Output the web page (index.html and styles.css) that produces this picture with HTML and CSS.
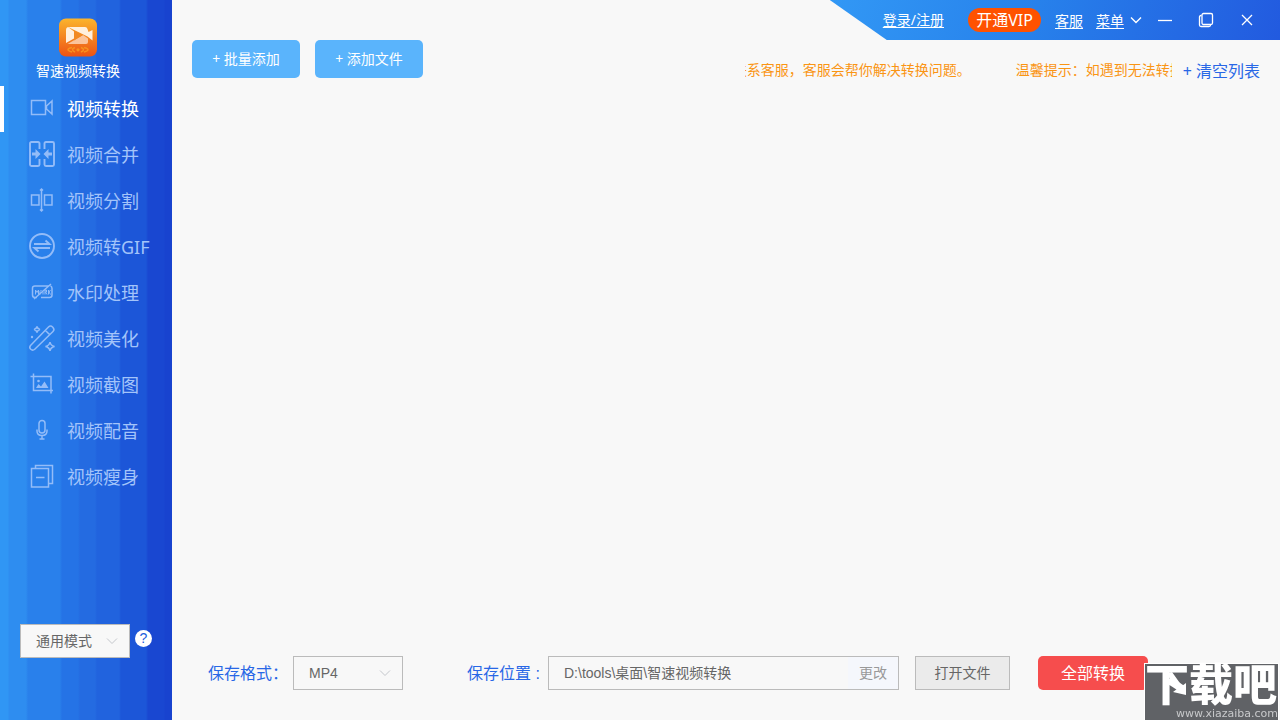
FILE: index.html
```html
<!DOCTYPE html>
<html lang="zh-CN">
<head>
<meta charset="utf-8">
<title>智速视频转换</title>
<link rel="stylesheet" href="styles.css">
</head>
<body>
<div class="app">
  <aside class="sidebar">
    <div class="brand">
      <svg class="brand-logo" viewBox="0 0 38 38" aria-hidden="true">
        <defs>
          <linearGradient id="logo-fill" x1="0" y1="0" x2="0" y2="1">
            <stop offset="0" stop-color="#fbb42c"/>
            <stop offset="1" stop-color="#ed5314"/>
          </linearGradient>
        </defs>
        <rect width="38" height="38" rx="7" fill="url(#logo-fill)"/>
        <path d="M9 8.500H26Q28 8.500 28.500 10.500L29.500 13.500L33.500 11.500V22L28.500 18L9 8.500Z" fill="#fff0de"/>
        <path d="M9 8.500Q7 9 7 11V24.500L15 20V13Z" fill="#fff0de"/>
        <path d="M8.500 25.500L24 16.500L29 20V23.500Q29 25.500 27 25.500Z" fill="#fbc49c"/>
        <path d="M15 12L24 16.500L15 22Z" fill="#f28a22"/>
        <path d="M13 29Q5 31 13 33.500M16 29Q11 31 16 33.500M22 29Q27 31 22 33.500M25 29Q33 31 25 33.500" fill="none" stroke="#f7921e" stroke-width="1.500"/>
        <circle cx="19" cy="31.300" r="1.600" fill="#f7921e"/>
      </svg>
      <span class="brand-name">智速视频转换</span>
    </div>
    <nav class="menu">
      <button class="menu-item active" type="button">
        <svg class="icon" viewBox="0 0 26 26"><path d="M2.500 5.500H16.500V19.500H2.500ZM23 6V19L17.500 14V11L23 6Z"/></svg>视频转换</button>
      <button class="menu-item" type="button">
        <svg class="icon bold" viewBox="0 0 26 26"><path d="M10.500 8V2.500Q10.500 1 9 1H2.500Q1 1 1 2.500V23.500Q1 25 2.500 25H9Q10.500 25 10.500 23.500V18M15.500 8V2.500Q15.500 1 17 1H23.500Q25 1 25 2.500V23.500Q25 25 23.500 25H17Q15.500 25 15.500 23.500V18"/><path class="solid" d="M3 11.500H6.500V8L11.500 13L6.500 18V14.500H3ZM23 11.500H19.500V8L14.500 13L19.500 18V14.500H23Z"/></svg>视频合并</button>
      <button class="menu-item" type="button">
        <svg class="icon" viewBox="0 0 26 26"><path d="M2.500 8H10V18H2.500ZM15.500 8H23V18H15.500ZM12.500 3V23M11 3.500L12.500 2L14 3.500M11 22.500L12.500 24L14 22.500"/></svg>视频分割</button>
      <button class="menu-item" type="button">
        <svg class="icon bold" viewBox="0 0 26 26"><circle cx="13" cy="13" r="12"/><path d="M5 11H20.500L16.500 7.500M21 15H5.500L9.500 18.500"/></svg>视频转GIF</button>
      <button class="menu-item" type="button">
        <svg class="icon" viewBox="0 0 26 26"><path d="M19.500 7H6Q3.500 7 3.500 9V16Q3.500 18.500 6 18.500H8M12 18.500H20.500Q23 18.500 23 16V9.500Q23 7.500 21.500 7M5 20L22 5"/><path class="small" d="M6.500 15.500V11L8 13.500L9.500 11V15.500M11 15.500V12.500L12.500 11M14 15.500V13M16 15.500V11H17.500V13H16.500L18 15.500M19.500 11V15.500M21.500 11L20 13L21.500 15.500"/></svg>水印处理</button>
      <button class="menu-item" type="button">
        <svg class="icon" viewBox="0 0 26 26"><path d="M1.500 20.500L19.500 2Q21.500 0 23.800 2.200Q26 4.500 24 6.500L5.500 24.500Q3.500 26 1.500 24Q0 22.500 1.500 20.500ZM16.500 5.500L21 10M8 1.500Q8.500 4 11 4.500Q8.500 5 8 7.500Q7.500 5 5 4.500Q7.500 4 8 1.500ZM21 17Q21.500 20.500 25.500 21.500Q21.500 22.500 21 26Q20.500 22.500 16.500 21.500Q20.500 20.500 21 17Z"/><circle class="solid" cx="3" cy="12" r="1.200"/></svg>视频美化</button>
      <button class="menu-item" type="button">
        <svg class="icon" viewBox="0 0 26 26"><path d="M4.500 2.500V19.500H24M1.500 5.500H22V22.500"/><path class="solid" d="M7 17L9.500 13L12 15.500L15.500 10.500L19.500 17Z"/><circle class="solid" cx="9.500" cy="10" r="1.300"/></svg>视频截图</button>
      <button class="menu-item" type="button">
        <svg class="icon" viewBox="0 0 26 26"><rect x="10" y="3.500" width="6" height="12.500" rx="3"/><path d="M8 12.500V14Q8 18.500 13 18.500Q18 18.500 18 14V12.500M13 18.500V22M10.500 22H15.500"/></svg>视频配音</button>
      <button class="menu-item" type="button">
        <svg class="icon" viewBox="0 0 26 26"><path d="M2.500 5.500H19.500V24H2.500ZM6.500 5V2.500H23.500V20.500H20M7 14.500H15.500"/></svg>视频瘦身</button>
    </nav>
    <div class="mode">
      <label class="select-box">
        <select class="select" aria-label="模式"><option>通用模式</option></select>
        <svg class="chevron" viewBox="0 0 12 8"><path d="M1 1.500L6 6.500L11 1.500"/></svg>
      </label>
      <button class="help" type="button">?</button>
    </div>
  </aside>

  <main class="main">
    <header class="topbar">
      <a class="top-link login" href="#">登录/注册</a>
      <button class="vip" type="button">开通VIP</button>
      <a class="top-link low service" href="#">客服</a>
      <a class="top-link low" href="#">菜单</a>
      <svg class="menu-arrow" viewBox="0 0 12 8"><path d="M1 1.500L6 6.500L11 1.500"/></svg>
      <div class="window-controls">
        <button class="window-button" type="button" aria-label="最小化"><svg viewBox="0 0 16 16"><path d="M1 8.500H15"/></svg></button>
        <button class="window-button" type="button" aria-label="最大化"><svg viewBox="0 0 16 16"><rect x="4" y="1.500" width="10.500" height="11" rx="1.500"/><path d="M3.500 3.500H3Q1.500 3.500 1.500 5V13Q1.500 14.500 3 14.500H11Q12.500 14.500 12.500 13"/></svg></button>
        <button class="window-button" type="button" aria-label="关闭"><svg viewBox="0 0 16 16"><path d="M3 3L13 13M13 3L3 13"/></svg></button>
      </div>
    </header>

    <div class="toolbar">
      <button class="add-button" type="button">+ 批量添加</button>
      <button class="add-button" type="button">+ 添加文件</button>
      <div class="notice">
        <div class="notice-track">
          <span>联系客服，客服会帮你解决转换问题。</span>
          <span>温馨提示：如遇到无法转换</span>
        </div>
      </div>
      <button class="clear" type="button">+ 清空列表</button>
    </div>

    <section class="file-list" aria-label="文件列表"></section>

    <footer class="footer">
      <label class="footer-label" for="format">保存格式：</label>
      <div class="select-box">
        <select class="select" id="format"><option>MP4</option></select>
        <svg class="chevron" viewBox="0 0 12 8"><path d="M1 1.500L6 6.500L11 1.500"/></svg>
      </div>
      <label class="footer-label location" for="path">保存位置 :</label>
      <div class="path-box">
        <input class="path" id="path" type="text" value="D:\tools\桌面\智速视频转换">
        <button class="change" type="button">更改</button>
      </div>
      <button class="open" type="button">打开文件</button>
      <button class="convert" type="button">全部转换</button>
    </footer>
  </main>

  <div class="watermark">
    <span class="watermark-name">下载吧</span>
    <svg class="watermark-arrow" viewBox="0 0 24 28" aria-hidden="true"><path d="M2 3L8 2L18 16L22 13V25L9 22L13 19Z"/></svg>
    <span class="watermark-url">www.xiazaiba.com</span>
  </div>
</div>
</body>
</html>
```

FILE: styles.css
```css
* {
  box-sizing: border-box;
}

body {
  margin: 0;
  background: #f8f8f8;
  font-family: "Liberation Sans", "Noto Sans CJK SC", sans-serif;
  font-size: 14px;
}

button,
input,
select {
  margin: 0;
  padding: 0;
  border: 0;
  background: none;
  color: inherit;
  font: inherit;
}

svg {
  fill: none;
  stroke: currentColor;
}

.app {
  display: flex;
  min-height: 100vh;
}

.sidebar {
  display: flex;
  flex: none;
  flex-direction: column;
  width: 172px;
  padding: 18px 0 62px;
  background: linear-gradient(90deg, #3096f4 0 8px, #2e8df0 9px 26px, #2980eb 28px 60px, #2573e6 62px 78px, #246be1 80px 95px, #2163de 97px 119px, #1c56d8 121px 146px, #1947d1 148px 164px, #1843cf 165px);
  color: #fff;
}

.brand {
  display: flex;
  flex-direction: column;
  align-items: center;
  width: 156px;
  height: 68px;
}

.brand-logo {
  width: 38px;
  height: 39px;
  stroke: none;
}

.brand-name {
  line-height: 28px;
}

.menu {
  display: flex;
  flex: 1;
  flex-direction: column;
}

.menu-item {
  display: flex;
  align-items: center;
  gap: 12px;
  height: 46px;
  padding: 0 0 2px 29px;
  color: #a3c4fa;
  font-family: "Noto Sans", "Noto Sans CJK SC", sans-serif;
  font-size: 18px;
}

.menu-item.active {
  padding-left: 25px;
  border-left: 4px solid #fff;
  color: #fff;
}

.icon {
  flex: none;
  width: 26px;
  height: 26px;
  color: #93bcf8;
  stroke-width: 1.5;
  overflow: visible;
}

.icon.bold {
  stroke-width: 1.9;
}

.icon .solid {
  fill: currentColor;
  stroke: none;
}

.icon .small {
  stroke-width: 1;
}

.mode {
  display: flex;
  gap: 5px;
  padding-left: 20px;
}

.select-box {
  position: relative;
  flex: none;
  width: 110px;
  height: 34px;
}

.select {
  width: 100%;
  height: 100%;
  padding-left: 15px;
  border: 1px solid #bbb;
  border-radius: 0;
  background: #f8f8f8;
  color: #666;
  appearance: none;
}

.chevron {
  position: absolute;
  top: 13px;
  right: 12px;
  width: 12px;
  height: 8px;
  color: #c4c7cc;
  pointer-events: none;
}

.help {
  width: 17px;
  height: 17px;
  margin-top: 6px;
  border-radius: 50%;
  background: #fff;
  color: #2260dc;
  line-height: 17px;
}

.main {
  display: flex;
  flex: 1;
  flex-direction: column;
  min-width: 0;
}

.topbar {
  display: flex;
  align-items: center;
  align-self: flex-end;
  height: 40px;
  padding: 0 25px 0 53px;
  background: linear-gradient(110deg, #3298f5, #2781eb 45%, #225adf);
  clip-path: polygon(0 0, 100% 0, 100% 100%, 57px 100%);
  color: #fff;
  font-family: "Noto Sans", "Noto Sans CJK SC", sans-serif;
}

.top-link {
  color: #fff;
  line-height: 20px;
  text-underline-offset: 2px;
}

.top-link.low {
  margin-top: 2px;
}

.service {
  margin: 0 13px 0 14px;
}

.vip {
  width: 73px;
  height: 24px;
  margin-left: 24px;
  border-radius: 12px;
  background: #ff5200;
  font-size: 16px;
  line-height: 24px;
}

.menu-arrow {
  width: 12px;
  height: 8px;
  margin-left: 6px;
  stroke-width: 1.4;
}

.window-controls {
  display: flex;
  gap: 25px;
  margin-left: 15px;
}

.window-button {
  width: 16px;
  height: 16px;
}

.window-button svg {
  display: block;
  width: 16px;
  height: 16px;
  stroke-width: 1.3;
}

.toolbar {
  display: flex;
  padding: 0 20px;
}

.add-button {
  flex: none;
  width: 108px;
  height: 38px;
  margin-right: 15px;
  padding-bottom: 2px;
  border-radius: 5px;
  background: #5ab4fc;
  color: #fff;
  font-family: "Noto Sans", "Noto Sans CJK SC", sans-serif;
}

.notice {
  width: 427px;
  margin-left: auto;
  padding-top: 20px;
  overflow: hidden;
  color: #fa9514;
  line-height: 20px;
  white-space: nowrap;
}

.notice-track {
  display: flex;
  gap: 45px;
  margin-left: -12px;
}

.clear {
  height: 22px;
  margin: 20px 0 0 11px;
  color: #2867e6;
  font-family: "Noto Sans", "Noto Sans CJK SC", sans-serif;
  font-size: 16px;
  line-height: 22px;
}

.file-list {
  flex: 1;
}

.footer {
  display: flex;
  align-items: center;
  padding: 0 132px 30px 36px;
}

.footer-label {
  flex: none;
  width: 85px;
  padding-bottom: 2px;
  color: #2867e6;
  font-size: 16px;
}

.footer-label.location {
  width: 81px;
  margin-left: 64px;
}

.path-box {
  display: flex;
  flex: 1;
  height: 34px;
  border: 1px solid #bbb;
}

.path {
  flex: 1;
  min-width: 0;
  padding: 0 0 2px 15px;
  color: #666;
}

.change {
  width: 50px;
  padding-bottom: 2px;
  background: #f5f7fc;
  color: #999;
}

.open {
  width: 95px;
  height: 34px;
  margin-left: 16px;
  padding-bottom: 2px;
  border: 1px solid #bbb;
  background: #ebebeb;
  color: #666;
}

.convert {
  width: 110px;
  height: 34px;
  margin-left: 28px;
  padding-bottom: 2px;
  border-radius: 5px;
  background: #f64d4d;
  color: #fff;
  font-size: 16px;
}

.watermark {
  position: fixed;
  right: 2px;
  bottom: 0;
  display: flex;
  flex-direction: column;
  width: 133px;
  height: 56px;
  background: #606266;
  box-shadow: 0 0 0 1px #fff;
  color: #fff;
}

.watermark-name {
  font-size: 44px;
  font-weight: 900;
  line-height: 43px;
}

.watermark-arrow {
  position: absolute;
  top: 6px;
  left: 19px;
  width: 24px;
  height: 28px;
  fill: #fff;
  stroke: none;
}

.watermark-url {
  color: #c8c9cb;
  font-family: "DejaVu Sans", sans-serif;
  font-size: 11px;
  line-height: 13px;
  text-align: right;
}
```
